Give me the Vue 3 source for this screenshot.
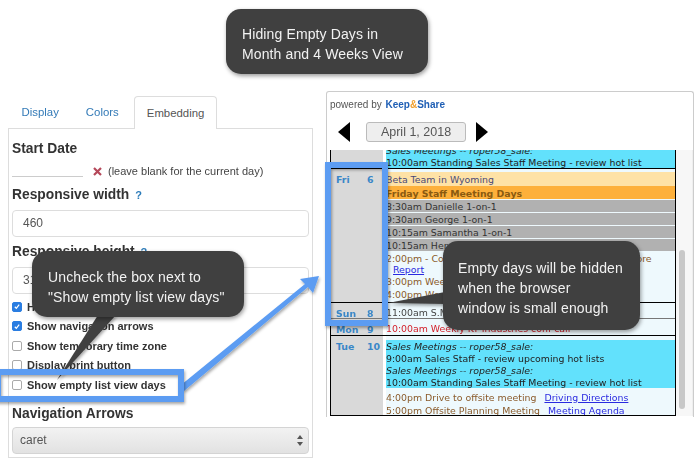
<script setup>
const checks = [
  { label: 'Hide calendar header', on: true },
  { label: 'Show navigation arrows', on: true },
  { label: 'Show temporary time zone', on: false },
  { label: 'Display print button', on: false },
  { label: 'Show empty list view days', on: false }
]
const days = [
  { id: 'thu', name: '', num: '', events: [
    { cls: 'cyan', text: 'Sales Meetings -- roper58_sale:', it: true },
    { cls: 'cyan', text: '10:00am Standing Sales Staff Meeting - review hot list' }
  ] },
  { id: 'fri', name: 'Fri', num: '6', events: [
    { cls: 'sand', text: 'Beta Team in Wyoming' },
    { cls: 'orange', text: 'Friday Staff Meeting Days' },
    { cls: 'gray', text: '8:30am Danielle 1-on-1' },
    { cls: 'gray', text: '9:30am George 1-on-1' },
    { cls: 'gray', text: '10:15am Samantha 1-on-1' },
    { cls: 'gray', text: '10:15am Henry 1-on-1' },
    { cls: 'brown', text: '2:00pm - Conference call with the local sales team more' },
    { cls: 'brown short', text: '', link: 'Report', indent: true },
    { cls: 'brown', text: '3:00pm Weekly planning review' },
    { cls: 'brown', text: '4:00pm Weekly wrap up' }
  ] },
  { id: 'sun', name: 'Sun', num: '8', events: [{ cls: 'plain', text: '11:00am S.M. Group Breakfast' }] },
  { id: 'mon', name: 'Mon', num: '9', events: [{ cls: 'red', text: '10:00am Weekly KT Industries conf call' }] },
  { id: 'tue', name: 'Tue', num: '10', events: [
    { cls: 'cyan', text: 'Sales Meetings -- roper58_sale:', it: true },
    { cls: 'cyan', text: '9:00am Sales Staff - review upcoming hot lists' },
    { cls: 'cyan', text: 'Sales Meetings -- roper58_sale:', it: true },
    { cls: 'cyan', text: '10:00am Standing Sales Staff Meeting - review hot list' },
    { cls: 'brown', text: '4:00pm Drive to offsite meeting', link: 'Driving Directions' },
    { cls: 'brown', text: '5:00pm Offsite Planning Meeting', link: 'Meeting Agenda' }
  ] }
]
</script>

<template>
  <div class="canvas">
    <section class="settings">
      <nav class="tabs">
        <a class="tab">Display</a>
        <a class="tab">Colors</a>
        <a class="tab active">Embedding</a>
      </nav>
      <div class="pane">
        <h3 class="h-first">Start Date</h3>
        <div class="date-row">
          <span class="blank"></span>
          <svg class="xmark" width="9" height="9" viewBox="0 0 9 9"><path d="M1 1l7 7M8 1l-7 7" stroke="#b5485a" stroke-width="2.2" /></svg>
          <span>(leave blank for the current day)</span>
        </div>
        <h3 class="h-width">Responsive width <b class="q">?</b></h3>
        <div class="field">460</div>
        <h3 class="h-height">Responsive height <b class="q">?</b></h3>
        <div class="field">315</div>
        <ul class="checks">
          <li v-for="c in checks" :key="c.label">
            <span class="box" :class="{ on: c.on }">
              <svg v-if="c.on" width="11" height="11" viewBox="0 0 11 11"><path d="M2.5 5.8l2.1 2.2 3.9-5" fill="none" stroke="#fff" stroke-width="1.7" /></svg>
            </span>
            {{ c.label }}
          </li>
        </ul>
        <h3 class="h-nav">Navigation Arrows</h3>
        <div class="select">
          <span>caret</span>
          <svg width="6" height="11" viewBox="0 0 6 11"><path d="M3 0l3 4H0zM3 11L0 7h6z" fill="#555" /></svg>
        </div>
      </div>
    </section>

    <section class="calendar">
      <div class="powered">powered by <b class="brand">Keep<i>&amp;</i>Share</b></div>
      <div class="nav">
        <span class="tri left"></span>
        <span class="date-btn">April 1, 2018</span>
        <span class="tri right"></span>
      </div>
      <div class="body">
        <div class="list">
          <div class="clip">
            <div v-for="d in days" :key="d.id" class="day" :class="d.id">
              <div class="dayname"><span class="dn">{{ d.name }}</span><span>{{ d.num }}</span></div>
              <div class="events">
                <div v-for="(e, i) in d.events" :key="i" class="ev" :class="[e.cls, { it: e.it, indent: e.indent }]">
                  {{ e.text }}<a v-if="e.link" class="lnk">{{ e.link }}</a>
                </div>
              </div>
            </div>
          </div>
        </div>
        <div class="scroll"><span class="thumb"></span></div>
      </div>
    </section>

    <svg class="overlay" width="700" height="467" viewBox="0 0 700 467">
      <defs>
        <filter id="sh" x="-20%" y="-20%" width="140%" height="140%">
          <feDropShadow dx="1" dy="2" stdDeviation="1.5" flood-color="#000" flood-opacity=".35" />
        </filter>
      </defs>
      <g filter="url(#sh)">
        <path d="M181 385L305 284l-5-5 19-3-6 17-5-6L184 391z" fill="#5b9cf2" />
        <path d="M98 315L57 380 116 315z" fill="#404040" />
        <path d="M445 292L388 303 445 304z" fill="#404040" />
      </g>
      <g filter="url(#sh)" fill="none" stroke="#5b9cf2" stroke-width="6">
        <rect x="328" y="165" width="57" height="158" />
        <rect x="-2" y="372" width="183" height="27" />
      </g>
    </svg>

    <div class="callout c-title">Hiding Empty Days in<br />Month and 4 Weeks View</div>
    <div class="callout c-check">Uncheck the box next to<br />"Show empty list view days"</div>
    <div class="callout c-empty">Empty days will be hidden<br />when the browser<br />window is small enough</div>
  </div>
</template>

<style>
html, body { margin: 0; background: #fff; overflow: hidden; }
</style>

<style scoped>
.canvas {
  position: relative;
  width: 700px;
  height: 467px;
  overflow: hidden;
  background: #fff;
  font-family: "Liberation Sans", Arial, sans-serif;
  color: #333;
}

/* settings window */
.settings {
  position: absolute;
  left: 8px;
  top: 96px;
  width: 305px;
  filter: blur(.35px);
}
.tabs { display: flex; height: 32px; }
.tab {
  display: flex;
  align-items: center;
  padding: 0 13.5px;
  font-size: 11.4px;
  color: #337ab7;
}
.tab.active {
  margin: 0 0 -1px 1.5px;
  padding: 0 12px;
  height: 33px;
  box-sizing: border-box;
  color: #555;
  background: #fff;
  border: 1px solid #ddd;
  border-bottom: 0;
  border-radius: 4px 4px 0 0;
  position: relative;
  z-index: 1;
}
.pane {
  box-sizing: border-box;
  height: 330px;
  padding: 0 3px;
  border: 1px solid #ddd;
}
h3 { margin: 0; font-size: 13.8px; line-height: 18px; font-weight: bold; color: #333; }
.h-first { margin-top: 11px; }
.date-row {
  display: flex;
  align-items: center;
  height: 18px;
  margin-top: 4px;
  font-size: 11px;
  color: #444;
}
.blank { align-self: flex-start; width: 71px; height: 15px; border-bottom: 1px solid #ccc; box-sizing: border-box; margin-right: 10px; }
.xmark { margin-right: 6px; }
.h-width { margin-top: 6px; }
.h-height { margin-top: 6px; }
.q { color: #2b7bb9; font-size: 11px; margin-left: 2px; }
.field {
  box-sizing: border-box;
  height: 27px;
  margin-top: 6px;
  padding-left: 10px;
  line-height: 25px;
  font-size: 12px;
  color: #555;
  border: 1px solid #ddd;
  border-radius: 4px;
}
.checks { list-style: none; margin: 3px 0 0; padding: 0; }
.checks li {
  display: flex;
  align-items: center;
  gap: 5px;
  height: 19.5px;
  font-size: 11px;
  font-weight: bold;
}
.box {
  box-sizing: border-box;
  width: 10px;
  height: 10px;
  flex: none;
  display: flex;
  align-items: center;
  justify-content: center;
  background: #fff;
  border: 1px solid #aaa;
  border-radius: 2px;
}
.box.on { background: #2a7de1; border-color: #2a7de1; }
.h-nav { margin-top: 10px; }
.select {
  box-sizing: border-box;
  height: 27px;
  margin-top: 4px;
  padding: 0 5px 0 7px;
  display: flex;
  align-items: center;
  justify-content: space-between;
  font-size: 12px;
  color: #555;
  background: linear-gradient(#f2f2f2, #e2e2e2);
  border: 1px solid #d4d4d4;
  border-radius: 4px;
}

/* calendar window */
.calendar {
  position: absolute;
  left: 326px;
  top: 91px;
  box-sizing: border-box;
  width: 368px;
  height: 326px;
  border: 1px solid #ccc;
  border-bottom: 0;
  border-radius: 3px 3px 0 0;
  filter: blur(.35px);
}
.powered { height: 12px; margin: 7px 0 0 3px; font-size: 10px; line-height: 12px; color: #555; }
.brand { color: #1f5fb5; margin-left: 1px; }
.brand i { color: #f0a030; font-style: normal; }
.nav { display: flex; align-items: center; height: 20px; margin: 11px 0 0 11px; }
.tri { width: 0; height: 0; border-top: 10px solid transparent; border-bottom: 10px solid transparent; }
.tri.left { border-right: 12px solid #000; }
.tri.right { border-left: 12px solid #000; }
.date-btn {
  box-sizing: border-box;
  width: 100px;
  height: 20px;
  margin: 0 10px 0 16px;
  text-align: center;
  font-size: 12.5px;
  line-height: 18px;
  color: #555;
  background: #eee;
  border: 1px solid #bbb;
  border-radius: 3px;
}
.body { display: flex; margin: 8px 0 0 3px; }
.list {
  box-sizing: border-box;
  width: 346px;
  height: 266px;
  border: solid #000;
  border-width: 0 1.5px 1.5px;
  overflow: hidden;
  font-family: "DejaVu Sans", Verdana, sans-serif;
  font-size: 9.4px;
  line-height: 13px;
}
.clip { margin-top: -9px; }
.day { display: flex; box-sizing: border-box; border-bottom: 1px solid #000; }
.day.thu { height: 28px; }
.day.fri { height: 134px; }
.day.sun { height: 16px; border-bottom-color: #777; }
.day.mon { height: 17px; }
.day.tue { height: 90px; border-bottom: 0; }
.dayname {
  box-sizing: border-box;
  width: 52px;
  flex: none;
  display: flex;
  padding: 4px 0 0 5px;
  background: #d9d9d9;
  color: #3a87c8;
  font-weight: bold;
}
.dn { width: 31px; }
.events { flex: 1; margin-left: 3px; background: #eef9fd; padding-top: 4px; overflow: hidden; }
.day.thu .events { background: #62e1fc; padding-top: 3px; }
.day.fri .events { padding-top: 3px; }
.day.sun .events, .day.mon .events { padding-top: 3px; }
.ev { height: 13px; white-space: nowrap; color: #333; }
.cyan { background: #62e1fc; color: #222; line-height: 15px; }
.it { font-style: italic; height: 11px; line-height: 13px; }
.sand { background: #fee2a6; color: #4a4a78; height: 14px; line-height: 15px; }
.orange { background: #fdb03b; color: #8a5a10; font-weight: bold; line-height: 15px; }
.gray { background: #b1b1b1; color: #333; margin-top: 1px; height: 12px; line-height: 14px; }
.brown { color: #8a5a2a; }
.short { height: 11px; line-height: 11px; margin-top: -1px; }
.red { color: #d3202a; }
.plain { color: #444; }
.indent { padding-left: 7px; }
.lnk { color: #2a2ae0; text-decoration: underline; margin-left: 8px; }
.indent .lnk { margin-left: 0; }
.day.fri .gray + .brown { margin-top: 1px; }
.day.tue .cyan + .brown { margin-top: 3px; }
.scroll { position: relative; width: 16px; background: #f7f7f7; border-right: 1px solid #eee; }
.thumb {
  position: absolute;
  left: 3px;
  top: 100px;
  width: 6px;
  height: 159px;
  background: #c8c8c8;
  border-radius: 3px;
}

/* annotations */
.overlay { position: absolute; left: 0; top: 0; pointer-events: none; }
.callout {
  position: absolute;
  box-sizing: border-box;
  background: #404040;
  color: #f2f2f2;
  font-size: 14px;
  line-height: 20px;
  letter-spacing: .12px;
  border-radius: 15px;
  box-shadow: 1px 2px 4px rgba(0, 0, 0, .4);
}
.c-title { left: 226px; top: 9px; width: 202px; height: 65px; padding: 15px 0 0 16px; }
.c-check { left: 32px; top: 251px; width: 212px; height: 66px; padding: 16px 0 0 16px; }
.c-empty { left: 443px; top: 241px; width: 197px; height: 89px; padding: 17px 0 0 15px; }
</style>
